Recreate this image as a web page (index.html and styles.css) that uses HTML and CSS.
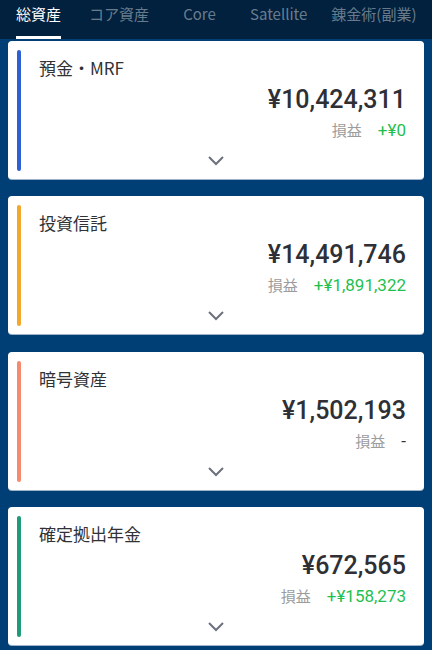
FILE: index.html
```
<!doctype html>
<html lang="ja">
    <head>
        <meta charset="utf-8">
        <title>資産</title>
        <meta name="viewport" content="width=device-width, initial-scale=1">
        <link rel="stylesheet" href="styles.css">
    </head>
    <body>
        <nav class="tabs">
            <div class="tab active"><span>総資産</span></div>
            <div class="tab"><span>コア資産</span></div>
            <div class="tab"><span>Core</span></div>
            <div class="tab"><span>Satellite</span></div>
            <div class="tab"><span>錬金術(副業)</span></div>
        </nav>

        <main class="list">
            <section class="card">
                <div class="bar blue"></div>
                <h2 class="title">預金・MRF</h2>
                <div class="amount">¥10,424,311</div>
                <div class="pl"><span class="pl-label">損益</span><span class="pl-value up">+¥0</span></div>
                <svg class="chev" viewBox="0 0 16 10"><path d="M1 1 L8 8 L15 1"/></svg>
            </section>

            <section class="card">
                <div class="bar orange"></div>
                <h2 class="title">投資信託</h2>
                <div class="amount">¥14,491,746</div>
                <div class="pl"><span class="pl-label">損益</span><span class="pl-value up">+¥1,891,322</span></div>
                <svg class="chev" viewBox="0 0 16 10"><path d="M1 1 L8 8 L15 1"/></svg>
            </section>

            <section class="card">
                <div class="bar salmon"></div>
                <h2 class="title">暗号資産</h2>
                <div class="amount">¥1,502,193</div>
                <div class="pl"><span class="pl-label">損益</span><span class="pl-value">-</span></div>
                <svg class="chev" viewBox="0 0 16 10"><path d="M1 1 L8 8 L15 1"/></svg>
            </section>

            <section class="card">
                <div class="bar green"></div>
                <h2 class="title">確定拠出年金</h2>
                <div class="amount">¥672,565</div>
                <div class="pl"><span class="pl-label">損益</span><span class="pl-value up">+¥158,273</span></div>
                <svg class="chev" viewBox="0 0 16 10"><path d="M1 1 L8 8 L15 1"/></svg>
            </section>
        </main>
    </body>
</html>
```

FILE: styles.css
```
body {
	margin: 0;
	background: #003f75;
	font-family: Roboto, "Noto Sans CJK JP", sans-serif;
}

/* tab strip */
.tabs {
	display: flex;
	height: 39px;
	background: #01213e;
	overflow: hidden;
}
.tab {
	display: flex;
	justify-content: center;
	flex-shrink: 0;
	min-width: 77px;
	box-sizing: border-box;
	padding: 3px 12px 0;
	font-family: "Noto Sans CJK JP", sans-serif;
	font-size: 15px;
	line-height: 22px;
	color: rgba(255, 255, 255, .42);
	white-space: nowrap;
}
.tab span {
	display: block;
	padding-bottom: 11px;
	border-bottom: 3px solid transparent;
}
.tab.active {
	color: #fff;
}
.tab.active span {
	border-bottom-color: #fff;
}

/* cards */
.list {
	display: flex;
	flex-direction: column;
	gap: 17.33px;
	padding: 2px 8px 8px;
}
.card {
	display: grid;
	grid-template-columns: 4px 1fr;
	column-gap: 18px;
	padding: 9px 18px 8px 9px;
	background: #fff;
	border-radius: 4px;
	box-shadow: 0 1px 0 #9fb3c8;
}
.bar {
	grid-row: 1 / 5;
	grid-column: 1;
	border-radius: 2px;
}
.bar.blue { background: #2f5fd4; }
.bar.orange { background: #f3a72b; }
.bar.salmon { background: #f68a70; }
.bar.green { background: #1e9c77; }

.title {
	grid-column: 2;
	margin: 6px 0 0;
	font-family: "Noto Sans CJK JP", sans-serif;
	font-size: 17px;
	font-weight: 400;
	line-height: 24px;
	color: #303236;
}
.amount {
	grid-column: 2;
	margin-top: 4px;
	text-align: right;
	font-size: 25px;
	font-weight: 500;
	line-height: 32px;
	color: #2e3035;
}
.pl {
	grid-column: 2;
	display: flex;
	justify-content: flex-end;
	align-items: baseline;
	gap: 16px;
	margin-top: 2px;
	line-height: 24px;
}
.pl-label {
	font-family: "Noto Sans CJK JP", sans-serif;
	font-size: 15px;
	color: #9c9c9c;
}
.pl-value {
	font-size: 17px;
	color: #333;
}
.pl-value.up {
	color: #1fc04f;
}
.chev {
	grid-row: 4;
	grid-column: 1 / -1;
	justify-self: center;
	width: 16px;
	height: 10px;
	margin: 14px 0 5px 9px;
	fill: none;
	stroke: #6c717c;
	stroke-width: 2;
}
```
